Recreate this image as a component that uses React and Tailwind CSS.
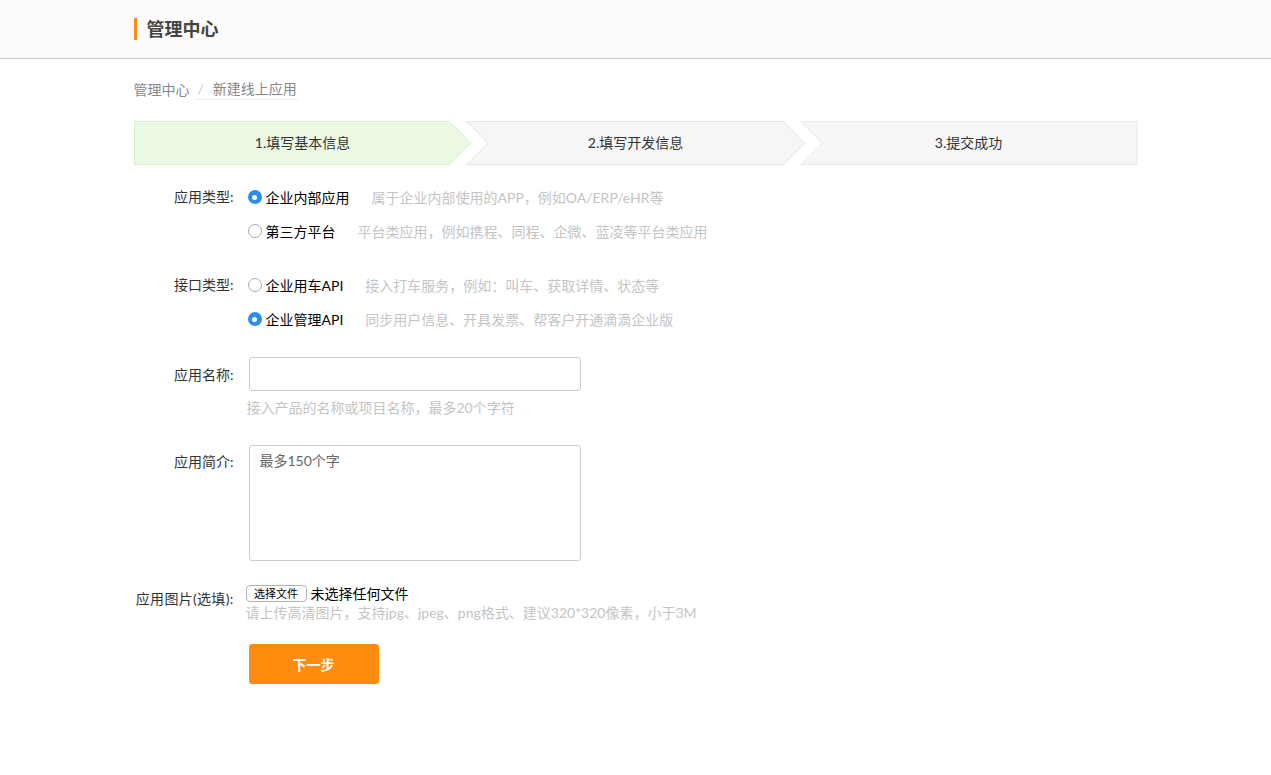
import React from "react";

const font = { fontFamily: "Lato, 'Noto Sans CJK SC', sans-serif" };

function Radio({ checked }) {
    return checked ? (
        <span className="w-[14px] h-[14px] rounded-full bg-[#2d8cf0] flex items-center justify-center shrink-0">
            <span className="w-[5px] h-[5px] rounded-full bg-white" />
        </span>
    ) : (
        <span className="w-[14px] h-[14px] rounded-full border border-[#aaa] bg-white shrink-0" />
    );
}

function RadioRow({ checked, label, hint }) {
    return (
        <div className="flex items-center h-5">
            <Radio checked={checked} />
            <span className="ml-1 text-[14px] text-black">{label}</span>
            <span className="ml-[22px] text-[14px] text-[#c4c4c4]">{hint}</span>
        </div>
    );
}

function Label({ children, className = "" }) {
    return (
        <div className={"w-[100px] shrink-0 text-right text-[14px] text-[#333] whitespace-nowrap " + className}>
            {children}
        </div>
    );
}

export default function App() {
    return (
        <div className="min-h-screen bg-white" style={font}>
            {/* header */}
            <div className="h-[59px] bg-[#fbfbf9] border-b border-[#cfcfcf]">
                <div className="w-[1004px] mx-auto h-full flex items-center">
                    <span className="w-[3px] h-[22px] bg-[#ff8c0f]" />
                    <span className="ml-[10px] text-[18px] font-bold text-[#444]">管理中心</span>
                </div>
            </div>

            <div className="w-[1004px] mx-auto">
                {/* breadcrumb */}
                <div className="mt-[20px] flex items-center text-[14px] leading-5 text-[#888]">
                    <span>管理中心</span>
                    <span className="ml-[5px] border-b border-[#ededed] pl-[3px] pr-[1px]">
                        <span className="text-[#ccc]">/</span>
                        <span className="ml-[9px]">新建线上应用</span>
                    </span>
                </div>

                {/* steps */}
                <div className="mt-[21px] flex h-[44px] text-[14px] leading-5 text-[#333]">
                    <div className="w-[338px] h-full p-px bg-[#d6efc9] [clip-path:polygon(0_0,316px_0,338px_22px,316px_44px,0_44px)]">
                        <div className="w-full h-full bg-[#ebf9e4] flex items-center justify-center [clip-path:polygon(0_0,315px_0,336px_21px,315px_42px,0_42px)]">
                            1.填写基本信息
                        </div>
                    </div>
                    <div className="-ml-[6px] w-[340px] h-full p-px bg-[#e4e4e4] [clip-path:polygon(0_0,318px_0,340px_22px,318px_44px,0_44px,22px_22px)]">
                        <div className="w-full h-full bg-[#f6f6f6] flex items-center justify-center [clip-path:polygon(1px_0,317px_0,338px_21px,317px_42px,1px_42px,22px_21px)]">
                            2.填写开发信息
                        </div>
                    </div>
                    <div className="-ml-[6px] w-[338px] h-full p-px bg-[#e8e8e8] [clip-path:polygon(0_0,100%_0,100%_100%,0_100%,22px_22px)]">
                        <div className="w-full h-full bg-[#f6f6f6] flex items-center justify-center [clip-path:polygon(1px_0,100%_0,100%_100%,1px_100%,22px_21px)]">
                            3.提交成功
                        </div>
                    </div>
                </div>

                {/* form */}
                <div className="mt-[22px]">
                    <div className="flex">
                        <Label className="leading-5">应用类型:</Label>
                        <div className="ml-[14px] flex flex-col gap-[14px]">
                            <RadioRow checked label="企业内部应用" hint="属于企业内部使用的APP，例如OA/ERP/eHR等" />
                            <RadioRow label="第三方平台" hint="平台类应用，例如携程、同程、企微、蓝凌等平台类应用" />
                        </div>
                    </div>

                    <div className="flex mt-[34px]">
                        <Label className="leading-5">接口类型:</Label>
                        <div className="ml-[14px] flex flex-col gap-[14px]">
                            <RadioRow label="企业用车API" hint="接入打车服务，例如：叫车、获取详情、状态等" />
                            <RadioRow checked label="企业管理API" hint="同步用户信息、开具发票、帮客户开通滴滴企业版" />
                        </div>
                    </div>

                    <div className="flex items-center mt-[28px]">
                        <Label>应用名称:</Label>
                        <input
                            type="text"
                            className="ml-[15px] w-[332px] h-[34px] border border-[#ccc] rounded-[3px] px-2 text-[14px] outline-none"
                        />
                    </div>
                    <div className="ml-[113px] mt-[7px] text-[14px] leading-5 text-[#c4c4c4]">
                        接入产品的名称或项目名称，最多20个字符
                    </div>

                    <div className="flex mt-[27px]">
                        <Label className="mt-[7px] leading-5">应用简介:</Label>
                        <textarea
                            placeholder="最多150个字"
                            className="ml-[15px] w-[332px] h-[116px] border border-[#ccc] rounded-[3px] px-[10px] py-[5px] text-[14px] leading-5 outline-none resize-none placeholder:text-[#666]"
                        />
                    </div>

                    <div className="flex mt-[22px]">
                        <Label className="mt-[6px] leading-5 tracking-[0.3px]">应用图片(选填):</Label>
                        <div className="ml-[12px]">
                            <div className="flex items-center h-[20px]">
                                <span className="h-[17px] w-[61px] border border-[#b4b4b4] rounded-[4px] bg-[#fdfdfd] text-[11px] leading-[15px] text-black text-center">
                                    选择文件
                                </span>
                                <span className="ml-[4px] text-[14px] text-black">未选择任何文件</span>
                            </div>
                            <div className="text-[14px] leading-5 text-[#c4c4c4]">
                                请上传高清图片，支持jpg、jpeg、png格式、建议320*320像素，小于3M
                            </div>
                        </div>
                    </div>

                    <button className="ml-[115px] mt-[21px] w-[130px] h-[40px] bg-[#ff8c0f] rounded-[3px] text-white text-[14px] font-bold">
                        下一步
                    </button>
                </div>
            </div>
        </div>
    );
}
